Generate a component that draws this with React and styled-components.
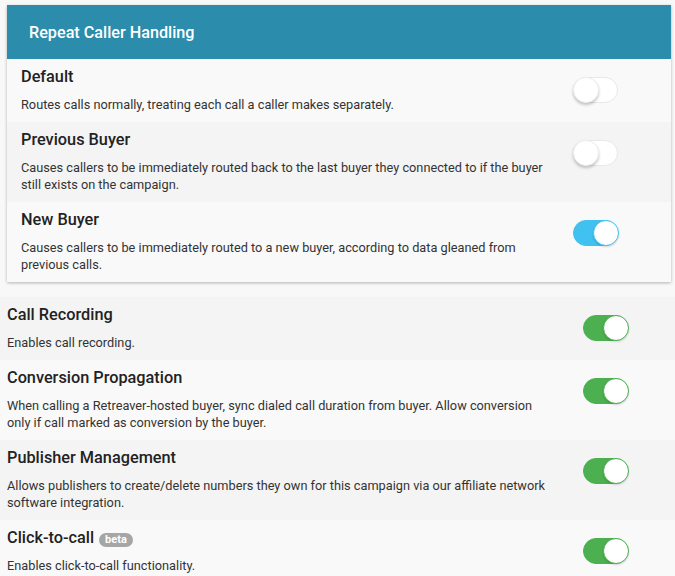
import React from "react";
import styled, { createGlobalStyle } from "styled-components";

const Global = createGlobalStyle`
  html, body { margin: 0; padding: 0; background: #f8f8f8; }
  body { font-family: Roboto, "Noto Sans", Arial, sans-serif; color: #222; }
`;

const Page = styled.div`
  width: 675px;
  padding-top: 5px;
`;

const Card = styled.section`
  margin: 0 4px 15px 7px;
  background: #f9f9f9;
  box-shadow: 0 1px 3px rgba(0, 0, 0, 0.28);
`;

const CardHeader = styled.h2`
  margin: 0;
  height: 54px;
  display: flex;
  align-items: center;
  padding-left: 22px;
  background: #2b8cab;
  color: #fff;
  font-size: 16.2px;
  font-weight: 500;
`;

const Row = styled.div`
  display: flex;
  align-items: flex-start;
  padding: 8px ${(p) => p.$padRight}px 9px ${(p) => p.$padLeft}px;
  background: ${(p) => (p.$shade ? "#f4f4f4" : "#f9f9f9")};
`;

const TextCol = styled.div`
  width: ${(p) => p.$width}px;
  flex: none;
`;

const Title = styled.div`
  font-size: 16.3px;
  line-height: 20px;
  font-weight: 500;
  color: #222;
  display: flex;
  align-items: center;
  gap: 5px;
`;

const Desc = styled.p`
  margin: 9px 0 0;
  font-size: 12.75px;
  line-height: 17px;
  color: #333;
`;

const Badge = styled.span`
  display: inline-block;
  background: #a6a6a6;
  color: #fff;
  font-size: 11px;
  font-weight: 700;
  line-height: 14px;
  padding: 0 6px;
  border-radius: 7px;
  margin-top: 3px;
`;

const Spacer = styled.div`
  flex: 1;
`;

const Track = styled.div`
  position: relative;
  flex: none;
  margin-top: 10px;
  width: 45px;
  height: 26px;
  box-sizing: border-box;
  border-radius: 13px;
  background: ${(p) => (p.$on ? p.$color : "#fff")};
  border: 1px solid ${(p) => (p.$on ? p.$color : "#e8e8e8")};
`;

const Knob = styled.span`
  position: absolute;
  top: -1px;
  left: ${(p) => (p.$on ? "19px" : "-1px")};
  width: 26px;
  height: 26px;
  box-sizing: border-box;
  border-radius: 50%;
  background: #fff;
  border: 1px solid ${(p) => (p.$on ? p.$color : "#eee")};
  box-shadow: ${(p) =>
    p.$on ? "0 1px 2px rgba(0,0,0,0.15)" : "0 2px 3px rgba(0,0,0,0.22)"};
`;

function Toggle({ on, color }) {
  return (
    <Track $on={on} $color={color}>
      <Knob $on={on} $color={color} />
    </Track>
  );
}

const repeatRows = [
  {
    title: "Default",
    desc: "Routes calls normally, treating each call a caller makes separately.",
    on: false,
  },
  {
    title: "Previous Buyer",
    desc: "Causes callers to be immediately routed back to the last buyer they connected to if the buyer still exists on the campaign.",
    on: false,
  },
  {
    title: "New Buyer",
    desc: "Causes callers to be immediately routed to a new buyer, according to data gleaned from previous calls.",
    on: true,
  },
];

const settings = [
  { title: "Call Recording", desc: "Enables call recording." },
  {
    title: "Conversion Propagation",
    desc: "When calling a Retreaver-hosted buyer, sync dialed call duration from buyer. Allow conversion only if call marked as conversion by the buyer.",
  },
  {
    title: "Publisher Management",
    desc: "Allows publishers to create/delete numbers they own for this campaign via our affiliate network software integration.",
  },
  { title: "Click-to-call", badge: "beta", desc: "Enables click-to-call functionality." },
];

export default function App() {
  return (
    <Page>
      <Global />
      <Card>
        <CardHeader>Repeat Caller Handling</CardHeader>
        {repeatRows.map((r, i) => (
          <Row key={r.title} $shade={i % 2 === 1} $padLeft={14} $padRight={53}>
            <TextCol $width={534}>
              <Title>{r.title}</Title>
              <Desc>{r.desc}</Desc>
            </TextCol>
            <Spacer />
            <Toggle on={r.on} color="#40c1ef" />
          </Row>
        ))}
      </Card>
      {settings.map((s, i) => (
        <Row key={s.title} $shade={i % 2 === 0} $padLeft={7} $padRight={47}>
          <TextCol $width={546}>
            <Title>
              {s.title}
              {s.badge && <Badge>{s.badge}</Badge>}
            </Title>
            <Desc>{s.desc}</Desc>
          </TextCol>
          <Spacer />
          <Toggle on color="#4caf50" />
        </Row>
      ))}
    </Page>
  );
}
